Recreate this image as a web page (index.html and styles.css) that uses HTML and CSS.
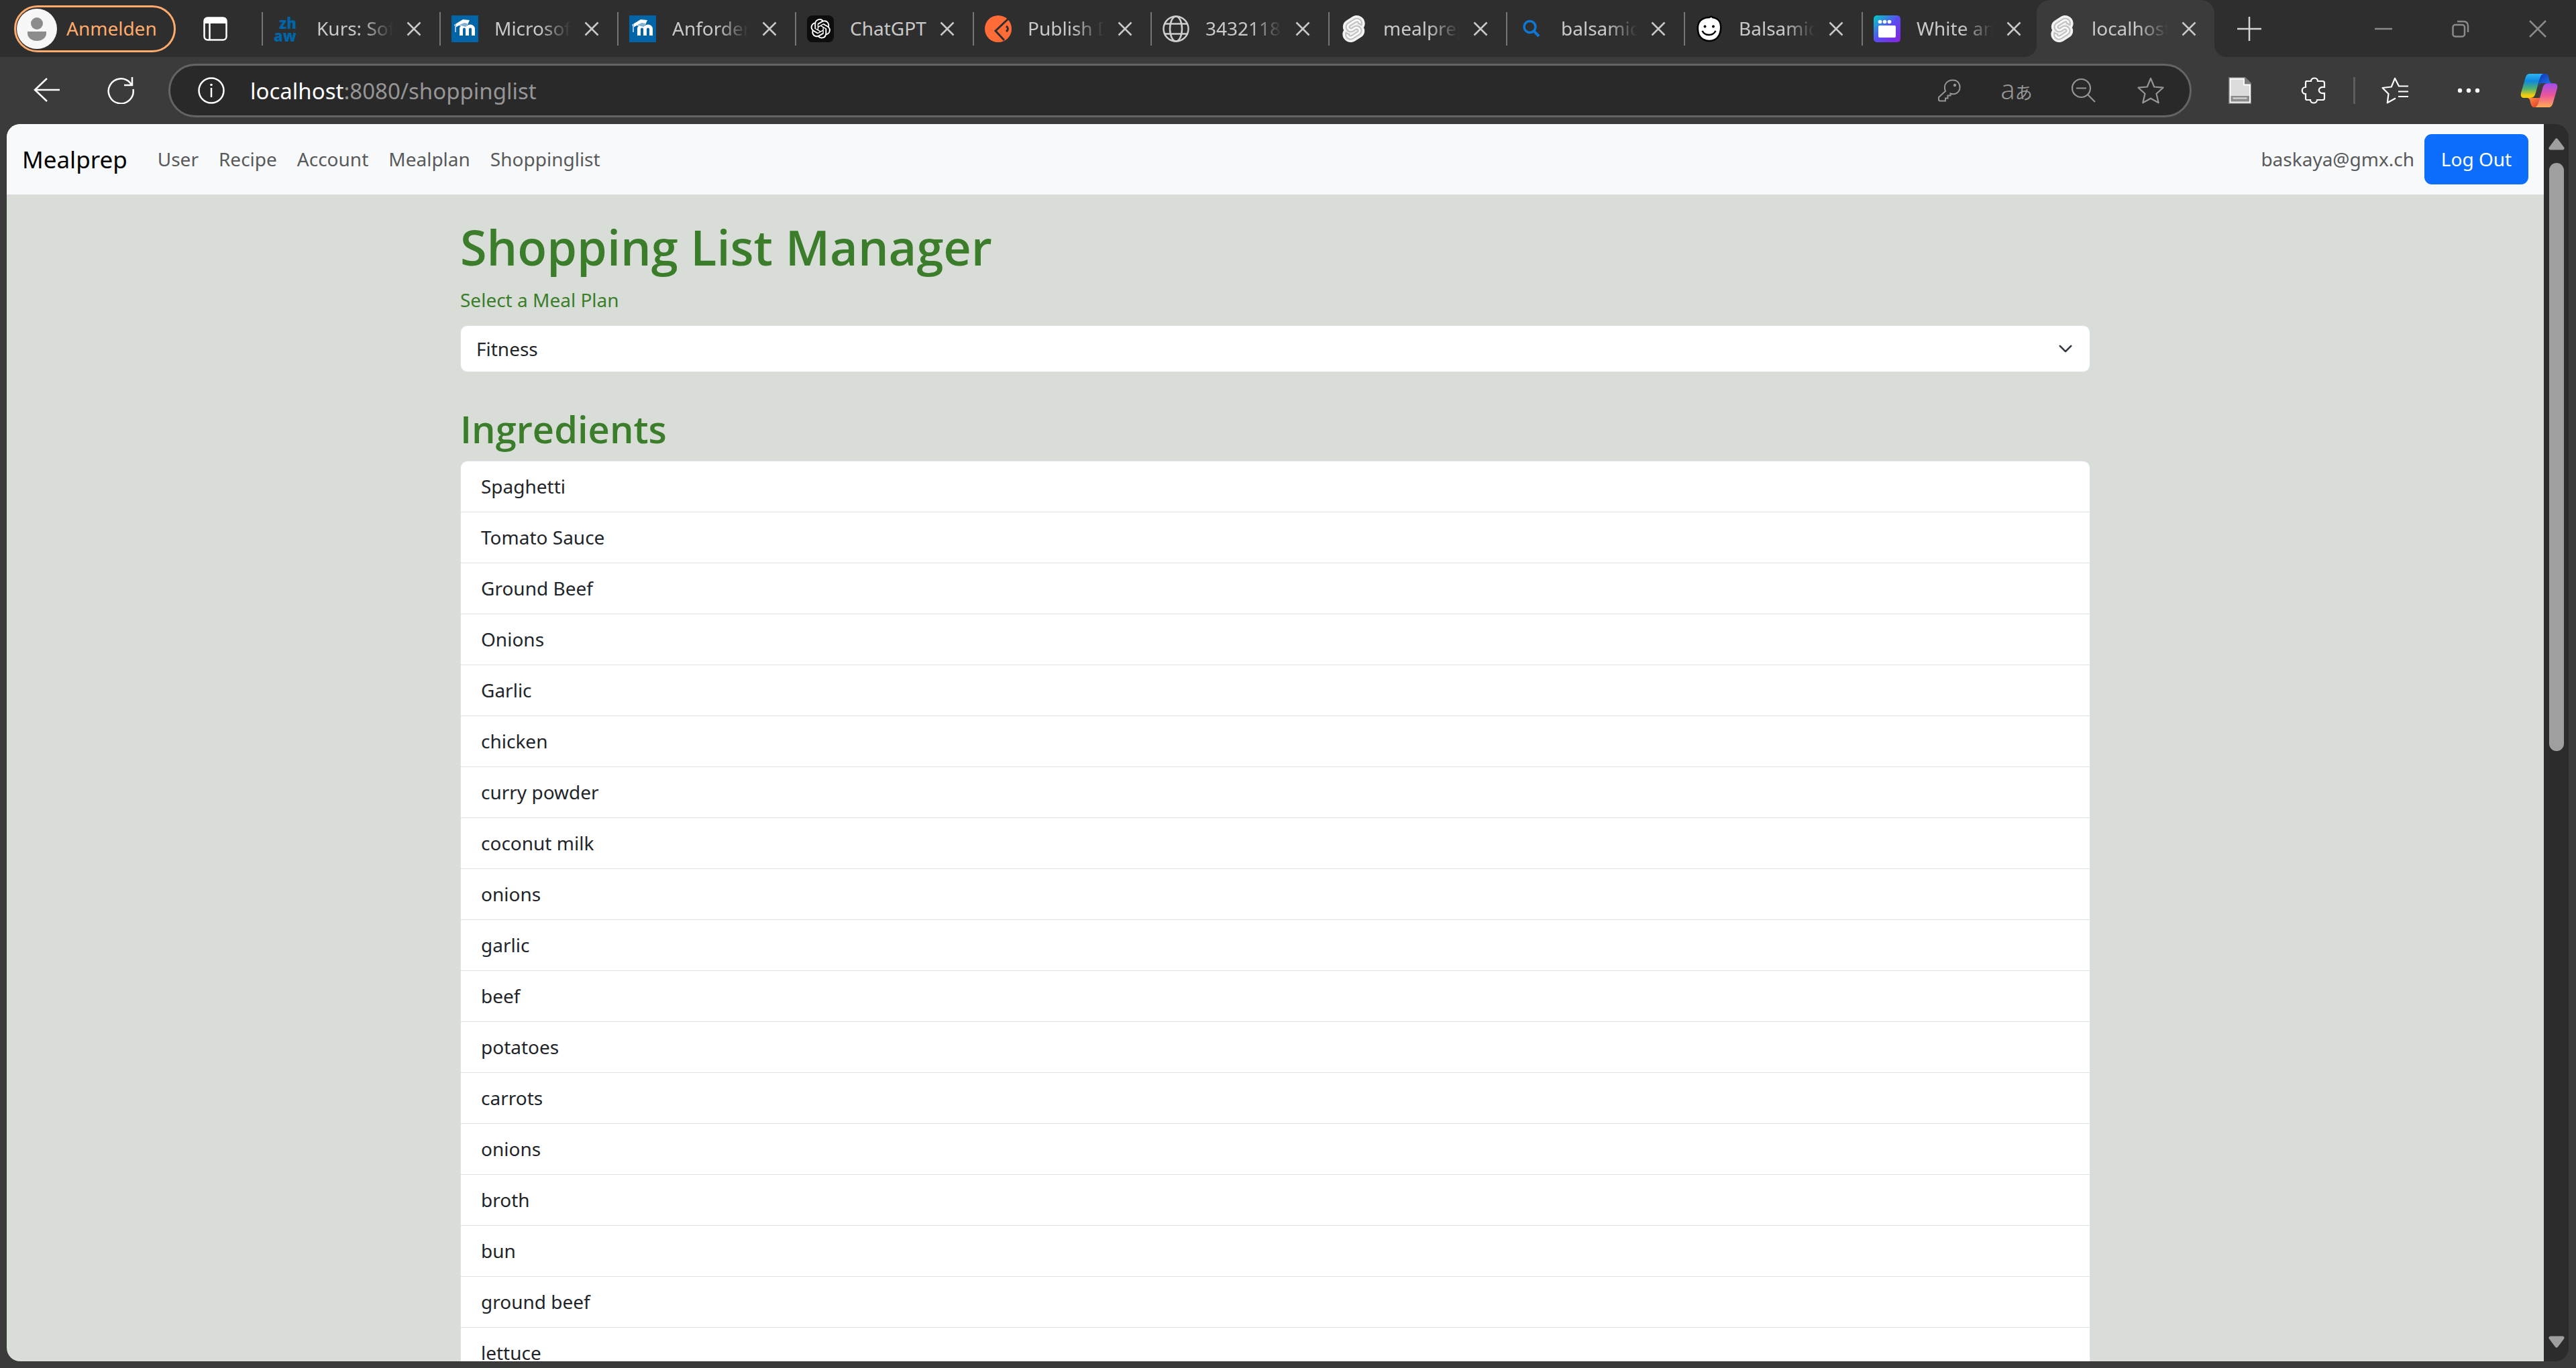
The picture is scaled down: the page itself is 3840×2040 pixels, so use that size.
FILE: index.html
```html
<!DOCTYPE html>
<html lang="de">
<head>
<meta charset="utf-8">
<title>localhost:8080/shoppinglist</title>
<link rel="stylesheet" href="styles.css">
</head>
<body>
<svg class="defs" aria-hidden="true">
  <defs>
    <symbol id="close" viewBox="0 0 22 22"><path d="M1.500 1.500l19 19M20.500 1.500l-19 19" fill="none" stroke="currentColor" stroke-width="2.500"/></symbol>
    <symbol id="moodle" viewBox="0 0 40 40">
      <path fill="#0064a6" d="M0 0h40v40H0z"/>
      <path d="M12.500 30V20.500c0-6 9-6 9 0V30M21.500 20.500c0-6 9-6 9 0V30" transform="translate(2)" fill="none" stroke="#fff" stroke-width="5"/>
      <path d="M4 14l13-8 10 1-3 7-8 2-5-1-5 3z" fill="#fff"/>
      <path d="M12 14l7-3 5 1-2 5-5-1z" fill="#7fb1d2"/>
      <path d="M6 13v12" stroke="#9cc3dd" stroke-width="2"/>
    </symbol>
    <symbol id="svelte" viewBox="0 0 24 24">
      <path fill="#f2f2f2" d="M20.712 3.175C18.484-.015 14.082-.96 10.9 1.068L5.310 4.630a6.412 6.412 0 0 0-2.896 4.295 6.753 6.753 0 0 0 .666 4.336 6.430 6.430 0 0 0-.96 2.396 6.833 6.833 0 0 0 1.168 5.167c2.229 3.190 6.630 4.135 9.812 2.108l5.590-3.562a6.410 6.410 0 0 0 2.896-4.295 6.756 6.756 0 0 0-.665-4.336 6.429 6.429 0 0 0 .958-2.396 6.831 6.831 0 0 0-1.167-5.168Z"/>
      <path fill="#fafafa" stroke="#c2c2c2" stroke-width="1.300" d="M10.354 21.125a4.440 4.440 0 0 1-4.765-1.767 4.109 4.109 0 0 1-.703-3.107 3.898 3.898 0 0 1 .134-.522l.105-.321.287.21a7.210 7.210 0 0 0 2.186 1.092l.208.063-.02.208a1.253 1.253 0 0 0 .226.83 1.337 1.337 0 0 0 1.435.533 1.231 1.231 0 0 0 .343-.15l5.590-3.562a1.164 1.164 0 0 0 .524-.778 1.242 1.242 0 0 0-.211-.937 1.338 1.338 0 0 0-1.435-.533 1.230 1.230 0 0 0-.343.15l-2.133 1.360a4.078 4.078 0 0 1-1.135.499 4.440 4.440 0 0 1-4.765-1.766 4.108 4.108 0 0 1-.702-3.108 3.855 3.855 0 0 1 1.742-2.582l5.589-3.563a4.072 4.072 0 0 1 1.135-.499 4.440 4.440 0 0 1 4.765 1.767 4.109 4.109 0 0 1 .703 3.107 3.943 3.943 0 0 1-.134.522l-.105.321-.286-.21a7.204 7.204 0 0 0-2.187-1.093l-.208-.063.02-.207a1.255 1.255 0 0 0-.226-.831 1.337 1.337 0 0 0-1.435-.532 1.231 1.231 0 0 0-.343.15L8.620 9.368a1.162 1.162 0 0 0-.524.778 1.240 1.240 0 0 0 .211.937 1.338 1.338 0 0 0 1.435.533 1.235 1.235 0 0 0 .344-.151l2.132-1.360a4.067 4.067 0 0 1 1.135-.498 4.440 4.440 0 0 1 4.765 1.766 4.108 4.108 0 0 1 .702 3.108 3.857 3.857 0 0 1-1.742 2.583l-5.589 3.562a4.072 4.072 0 0 1-1.135.499"/>
    </symbol>
    <linearGradient id="app" x1="0" y1="0" x2="1" y2="1"><stop offset="0" stop-color="#00d0c4"/><stop offset=".5" stop-color="#5a4cf0"/><stop offset="1" stop-color="#8a22e0"/></linearGradient>
    <linearGradient id="cool" x1="0" y1="0" x2="0" y2="1"><stop offset="0" stop-color="#2fb4f5"/><stop offset=".3" stop-color="#1089dc"/><stop offset=".62" stop-color="#4fb071"/><stop offset=".9" stop-color="#f2cb10"/></linearGradient>
    <linearGradient id="warm" x1="0" y1="0" x2="0" y2="1"><stop offset="0" stop-color="#a04bee"/><stop offset=".5" stop-color="#ee559a"/><stop offset="1" stop-color="#fdae52"/></linearGradient>
    <linearGradient id="deep" x1="0" y1="0" x2="1" y2="1"><stop offset="0" stop-color="#1234b4"/><stop offset="1" stop-color="#1d7ff0"/></linearGradient>
    <linearGradient id="fire" x1="0" y1="0" x2="1" y2="1"><stop offset="0" stop-color="#ff9140"/><stop offset="1" stop-color="#e2352f"/></linearGradient>
  </defs>
</svg>

<header class="browser">
  <div class="tabstrip">
    <button class="profile">
      <svg class="avatar" viewBox="0 0 60 60"><circle cx="30" cy="30" r="30" fill="#f7f7f7"/><circle cx="30" cy="22" r="9" fill="#8c8c8c"/><path d="M16 34h28v3c0 6-6 11-14 11s-14-5-14-11z" fill="#8c8c8c"/></svg>
      <span>Anmelden</span>
    </button>
    <button class="workspaces" aria-label="Tabs"><svg viewBox="0 0 36 36"><rect x="1.500" y="1.500" width="33" height="33" rx="5" fill="none" stroke="#fff" stroke-width="2.500"/><path d="M1 10V6q0-5 5-5h24q5 0 5 5v4z" fill="#fff"/><path d="M9.500 9v25" stroke="#fff" stroke-width="2.500"/></svg></button>
    <nav class="tabs" aria-label="Offene Tabs">
      <div class="tab"><svg class="fav" viewBox="0 0 40 40"><text class="zhaw" x="8" y="20">zh</text><text class="zhaw" x="0" y="39">aw</text></svg><span class="title fade">Kurs: Software</span><button class="x" aria-label="Tab schließen"><svg><use href="#close"/></svg></button></div>
      <div class="tab"><svg class="fav"><use href="#moodle"/></svg><span class="title fade">Microsoft</span><button class="x" aria-label="Tab schließen"><svg><use href="#close"/></svg></button></div>
      <div class="tab"><svg class="fav"><use href="#moodle"/></svg><span class="title fade">Anforderung</span><button class="x" aria-label="Tab schließen"><svg><use href="#close"/></svg></button></div>
      <div class="tab"><svg class="fav" viewBox="0 0 40 40"><rect width="40" height="40" rx="8" fill="#0d0d0d"/><path transform="translate(5.500 5) scale(1.230)" fill="#fff" d="M22.2819 9.8211a5.9847 5.9847 0 0 0-.5157-4.9108 6.0462 6.0462 0 0 0-6.5098-2.9A6.0651 6.0651 0 0 0 4.9807 4.1818a5.9847 5.9847 0 0 0-3.9977 2.9 6.0462 6.0462 0 0 0 .7427 7.0966 5.98 5.98 0 0 0 .511 4.9107 6.051 6.051 0 0 0 6.5146 2.9001A5.9847 5.9847 0 0 0 13.2599 24a6.0557 6.0557 0 0 0 5.7718-4.2058 5.9894 5.9894 0 0 0 3.9977-2.9001 6.0557 6.0557 0 0 0-.7475-7.0729zm-9.022 12.6081a4.4755 4.4755 0 0 1-2.8764-1.0408l.1419-.0804 4.7783-2.7582a.7948.7948 0 0 0 .3927-.6813v-6.7369l2.02 1.1686a.071.071 0 0 1 .038.052v5.5826a4.504 4.504 0 0 1-4.4945 4.4944zm-9.6607-4.1254a4.4708 4.4708 0 0 1-.5346-3.0137l.142.0852 4.783 2.7582a.7712.7712 0 0 0 .7806 0l5.8428-3.3685v2.3324a.0804.0804 0 0 1-.0332.0615L9.74 19.9502a4.4992 4.4992 0 0 1-6.1408-1.6464zM2.3408 7.8956a4.485 4.485 0 0 1 2.3655-1.9728V11.6a.7664.7664 0 0 0 .3879.6765l5.8144 3.3543-2.0201 1.1685a.0757.0757 0 0 1-.071 0l-4.8303-2.7865A4.504 4.504 0 0 1 2.3408 7.872zm16.5963 3.8558L13.1038 8.364 15.1192 7.2a.0757.0757 0 0 1 .071 0l4.8303 2.7913a4.4944 4.4944 0 0 1-.6765 8.1042v-5.6772a.79.79 0 0 0-.407-.667zm2.0107-3.0231l-.142-.0852-4.7735-2.7818a.7759.7759 0 0 0-.7854 0L9.409 9.2297V6.8974a.0662.0662 0 0 1 .0284-.0615l4.8303-2.7866a4.4992 4.4992 0 0 1 6.6802 4.66zM8.3065 12.863l-2.02-1.1638a.0804.0804 0 0 1-.038-.0567V6.0742a4.4992 4.4992 0 0 1 7.3757-3.4537l-.142.0805L8.704 5.459a.7948.7948 0 0 0-.3927.6813zm1.0976-2.3654l2.602-1.4998 2.6069 1.4998v2.9994l-2.5974 1.4997-2.6067-1.4997Z"/></svg><span class="title">ChatGPT</span><button class="x" aria-label="Tab schließen"><svg><use href="#close"/></svg></button></div>
      <div class="tab"><svg class="fav" viewBox="0 0 40 40"><circle cx="20" cy="20" r="20" fill="#ff6c37"/><path d="M35 5L16 23l13 14" fill="none" stroke="#2e2e2e" stroke-width="3"/><path d="M32 16q5 4 0 8" fill="none" stroke="#2e2e2e" stroke-width="3"/></svg><span class="title fade">Publish Docs</span><button class="x" aria-label="Tab schließen"><svg><use href="#close"/></svg></button></div>
      <div class="tab"><svg class="fav" viewBox="0 0 40 40"><g fill="none" stroke="#cfcfcf" stroke-width="2.500"><circle cx="20" cy="20" r="18.500"/><ellipse cx="20" cy="20" rx="9" ry="18.500"/><path d="M3 12.500h34M3 27.500h34"/></g></svg><span class="title fade">3432118</span><button class="x" aria-label="Tab schließen"><svg><use href="#close"/></svg></button></div>
      <div class="tab"><svg class="fav"><use href="#svelte"/></svg><span class="title fade">mealprep</span><button class="x" aria-label="Tab schließen"><svg><use href="#close"/></svg></button></div>
      <div class="tab"><svg class="fav" viewBox="0 0 40 40"><circle cx="17.500" cy="17" r="8.500" fill="none" stroke="#0f78d4" stroke-width="3.500"/><path d="M23 23l8 8" stroke="#0f78d4" stroke-width="4"/></svg><span class="title fade">balsamiq</span><button class="x" aria-label="Tab schließen"><svg><use href="#close"/></svg></button></div>
      <div class="tab"><svg class="fav" viewBox="0 0 40 40"><path d="M20 3c3-3 5 0 5 0 11 2 13 9 12 18-1 11-8 17-17 17S3 32 3 21C2 10 8 3 20 3z" fill="#fff" stroke="#000" stroke-width="2.500"/><circle cx="13.500" cy="16.500" r="2" fill="#000"/><circle cx="26" cy="16.500" r="2" fill="#000"/><path d="M9.500 23c4 8 16 8 20 0" fill="none" stroke="#000" stroke-width="2.500"/></svg><span class="title fade">Balsamiq</span><button class="x" aria-label="Tab schließen"><svg><use href="#close"/></svg></button></div>
      <div class="tab"><svg class="fav" viewBox="0 0 40 40"><rect width="40" height="40" rx="5" fill="url(#app)"/><g fill="#fff"><circle cx="9.500" cy="9.500" r="2.800"/><circle cx="16.500" cy="9.500" r="2.800"/><circle cx="23.500" cy="9.500" r="2.800"/><rect x="7" y="15" width="26" height="18" rx="2"/></g></svg><span class="title fade">White and</span><button class="x" aria-label="Tab schließen"><svg><use href="#close"/></svg></button></div>
      <div class="tab active"><svg class="fav"><use href="#svelte"/></svg><span class="title fade">localhost</span><button class="x" aria-label="Tab schließen"><svg><use href="#close"/></svg></button></div>
    </nav>
    <button class="newtab" aria-label="Neuer Tab"><svg viewBox="0 0 36 36"><path d="M18 0v36M0 18h36" stroke="#d6d6d6" stroke-width="2.500"/></svg></button>
    <div class="window">
      <button aria-label="Minimieren"><svg viewBox="0 0 26 26"><path d="M0 13h26" stroke="currentColor" stroke-width="2.500"/></svg></button>
      <button aria-label="Verkleinern"><svg viewBox="0 0 26 26"><g fill="none" stroke="currentColor" stroke-width="2.500"><rect x="1.500" y="7" width="17.500" height="17.500" rx="3.500"/><path d="M8 2h9q7 0 7 7v9"/></g></svg></button>
      <button aria-label="Schließen"><svg viewBox="0 0 26 26"><path d="M1 1l24 24M25 1L1 25" stroke="currentColor" stroke-width="2.500"/></svg></button>
    </div>
  </div>

  <div class="toolbar">
    <button class="tool" aria-label="Zurück"><svg viewBox="0 0 40 40"><path d="M39 19H2M20 2L2 19l18 17" fill="none" stroke="#fff" stroke-width="2.500"/></svg></button>
    <button class="tool" aria-label="Aktualisieren"><svg viewBox="0 0 40 40"><path d="M38.500 18A18.500 18.500 0 1 1 34 8.500L36.500 12M37 0v12H25" fill="none" stroke="#fff" stroke-width="2.500"/></svg></button>
    <div class="omnibox">
      <svg class="info" viewBox="0 0 40 40"><circle cx="20" cy="20" r="18.500" fill="none" stroke="#fff" stroke-width="2.500"/><path d="M20 16v14" stroke="#fff" stroke-width="2.500"/><circle cx="20" cy="11.500" r="1.800" fill="#fff"/></svg>
      <div class="url" role="textbox" aria-label="Adresse" contenteditable="true" spellcheck="false"><b>localhost</b>:8080/shoppinglist</div>
      <button aria-label="Passwort"><svg viewBox="0 0 40 40"><path d="M14 21C10 11 17 4.500 25 4.500S36 11 35.500 16C35 23 28 27 21.500 24.500v3h-4v4h-3.500v4H6c-1.500 0-2-.5-2-2V30z" fill="none" stroke="currentColor" stroke-width="2"/><circle cx="28" cy="12" r="2.200" fill="currentColor"/></svg></button>
      <button class="translate" aria-label="Übersetzen">a<small>あ</small></button>
      <button aria-label="Zoom"><svg viewBox="0 0 40 40"><g fill="none" stroke="currentColor" stroke-width="2.200"><circle cx="16.500" cy="16.500" r="13.500"/><path d="M26 26l11 11M9 16.500h15"/></g></svg></button>
      <button aria-label="Favorit"><svg viewBox="0 0 40 40"><path d="M20 1.800l5.200 12.700 13.300 1.200-10 9 3.200 13.600L20 31.700 8.300 38.300l3.200-13.600-10-9 13.300-1.200z" fill="none" stroke="currentColor" stroke-width="2.200" stroke-linejoin="round"/></svg></button>
    </div>
    <button class="tool" aria-label="Dokument"><svg viewBox="0 0 40 40"><path d="M3 0h25l9 9v31H3z" fill="#7a7a7a"/><path d="M5.500 2.500H26v9h9v26H5.500z" fill="#dcdcdc" stroke="#fff" stroke-width="1.800"/><path d="M6.500 28h27.500v8.500H6.500z" fill="#8b8b8b"/><path d="M9.500 31.500h21" stroke="#cfcfcf" stroke-width="2.500"/></svg></button>
    <button class="tool" aria-label="Erweiterungen"><svg viewBox="0 0 40 40"><path d="M8 6h8c0-6 10-6 10 0h7q3 0 3 3v6c-11-2-11 11 0 9v8q0 2-3 2h-8c0 6-10 6-10 0H10q-2 0-2-2v-7c-7 0-7-10 0-10V8q0-2 2-2" fill="none" stroke="#fff" stroke-width="2.200"/></svg></button>
    <span class="divider"></span>
    <button class="tool" aria-label="Favoriten"><svg viewBox="0 0 40 40"><path d="M40 13.500H26L20 1.800 14.800 14.500 1.500 16l9 9-1.700 13.300L21 31.500M25 21.500h15M25 29h15" fill="none" stroke="#fff" stroke-width="2.200" stroke-linejoin="round"/></svg></button>
    <button class="tool" aria-label="Mehr"><svg viewBox="0 0 40 40"><g fill="#fff"><circle cx="7" cy="20" r="3.200"/><circle cx="20" cy="20" r="3.200"/><circle cx="33" cy="20" r="3.200"/></g></svg></button>
    <button class="copilot" aria-label="Copilot"><svg viewBox="0 0 168 150"><path fill="url(#deep)" d="M85 0h28c10 0 13 10 15 20 3 12 5 20 14 22H98c-8 0-12 6-15 14z"/><path fill="url(#fire)" d="M32 108h58l-14 34c-3 6-8 8-14 8-10 0-14-10-17-22-2-12-5-18-13-20z"/><path fill="url(#cool)" d="M42 0h63C93 2 90 12 86 24L68 88c-5 14-10 20-22 20H18C4 108 0 98 3 86L22 20C26 6 32 0 42 0z"/><path fill="url(#warm)" d="M122 43h28c14 0 18 10 15 22l-19 66c-4 13-10 19-20 19H63c12-2 15-12 19-24l18-63c4-13 10-20 22-20z"/></svg></button>
  </div>
</header>

<div class="viewport">
  <div class="page">
    <nav class="navbar">
      <a class="brand" href="#">Mealprep</a>
      <a href="#user">User</a>
      <a href="#recipe">Recipe</a>
      <a href="#account">Account</a>
      <a href="#mealplan">Mealplan</a>
      <a href="#shoppinglist">Shoppinglist</a>
      <span class="email">baskaya@gmx.ch</span>
      <button class="logout">Log Out</button>
    </nav>
    <main class="container">
      <h1>Shopping List Manager</h1>
      <label for="plan">Select a Meal Plan</label>
      <select id="plan"><option>Fitness</option></select>
      <h2>Ingredients</h2>
      <ul class="list">
        <li>Spaghetti</li>
        <li>Tomato Sauce</li>
        <li>Ground Beef</li>
        <li>Onions</li>
        <li>Garlic</li>
        <li>chicken</li>
        <li>curry powder</li>
        <li>coconut milk</li>
        <li>onions</li>
        <li>garlic</li>
        <li>beef</li>
        <li>potatoes</li>
        <li>carrots</li>
        <li>onions</li>
        <li>broth</li>
        <li>bun</li>
        <li>ground beef</li>
        <li>lettuce</li>
      </ul>
    </main>
  </div>
  <div class="scrollbar" aria-hidden="true">
    <svg viewBox="0 0 24 18"><path d="M12 3L21 15H3z" fill="#9f9f9f" stroke="#9f9f9f" stroke-width="5" stroke-linejoin="round"/></svg>
    <div class="track"><div class="thumb"></div></div>
    <svg viewBox="0 0 24 18"><path d="M12 15L3 3h18z" fill="#9f9f9f" stroke="#9f9f9f" stroke-width="5" stroke-linejoin="round"/></svg>
  </div>
</div>
</body>
</html>
```
FILE: styles.css
```css
* { box-sizing: border-box; }

body {
  margin: 0;
  height: 100vh;
  display: flex;
  flex-direction: column;
  overflow: hidden;
  background: #3b3b3b;
  color: #212529;
  font-family: "Noto Sans", "Noto Sans CJK JP", sans-serif;
  font-size: 28px;
  line-height: 45px;
}

.defs { position: absolute; width: 0; height: 0; }
svg { display: block; flex: none; }

button {
  flex: none;
  display: flex;
  align-items: center;
  justify-content: center;
  margin: 0;
  padding: 0;
  border: 0;
  background: none;
  color: inherit;
  font: inherit;
}

/* Tab strip */
.tabstrip {
  display: flex;
  align-items: center;
  height: 85px;
  padding-left: 21px;
  background: #2e2e2e;
}

.profile {
  width: 241px;
  height: 70px;
  gap: 14px;
  justify-content: flex-start;
  padding-left: 1px;
  border: 3px solid #ffab6b;
  border-radius: 35px;
  color: #ffab6b;
}
.avatar { width: 60px; height: 60px; }

.workspaces { margin: 0 51px 0 41px; }
.workspaces svg { width: 36px; height: 36px; }

.tabs { display: flex; align-self: stretch; }

.tab {
  position: relative;
  width: 265px;
  display: flex;
  align-items: center;
  padding-left: 18px;
  color: #c9c9c9;
}
.tab:not(.active)::before {
  content: "";
  position: absolute;
  left: 0;
  width: 2px;
  height: 50px;
  background: #757575;
}
.fav { width: 40px; height: 40px; margin-right: 24px; overflow: visible; }
.zhaw { font: 800 22px/1 "Open Sans", sans-serif; fill: #0064a6; }
.title { width: 114px; overflow: hidden; white-space: nowrap; margin-right: 20px; }
.fade { mask-image: linear-gradient(to right, #000 68px, transparent 114px); }
.x svg { width: 22px; height: 22px; }

.active {
  margin-left: -4px;
  background: #3b3b3b;
  border-radius: 20px 20px 0 0;
}
.active::before,
.active::after {
  content: "";
  position: absolute;
  bottom: 0;
  width: 18px;
  height: 18px;
}
.active::before { right: 100%; background: radial-gradient(circle at 0 0, transparent 18px, #3b3b3b 18px); }
.active::after { left: 100%; background: radial-gradient(circle at 100% 0, transparent 18px, #3b3b3b 18px); }

.newtab { margin-left: 34px; }
.newtab svg { width: 36px; height: 36px; }

.window { display: flex; margin-left: auto; color: #8a8a8a; }
.window button { width: 115px; }
.window svg { width: 26px; height: 26px; }

/* Toolbar */
.toolbar {
  display: flex;
  align-items: center;
  height: 100px;
  padding: 0 5px 0 15px;
}
.tool { width: 110px; }
.tool svg { width: 40px; height: 40px; }
.copilot { width: 100px; }
.copilot svg { width: 56px; height: 50px; }
.divider { width: 3px; height: 40px; margin: 0 4px; background: #5e5e5e; }

.omnibox {
  flex: 1;
  display: flex;
  align-items: center;
  height: 80px;
  margin: 0 17px 0 16px;
  padding: 0 8px 0 41px;
  border: 3px solid #646464;
  border-radius: 40px;
  background: #292929;
  color: #969696;
}
.info { width: 40px; height: 40px; margin-right: 38px; }
.url { flex: 1; font-size: 33px; white-space: nowrap; }
.url b { font-weight: 400; color: #fff; }
.omnibox button { width: 100px; }
.omnibox button svg { width: 40px; height: 40px; }
.translate { font-size: 40px; font-weight: 300; align-items: baseline; }
.translate small { font-size: 26px; font-weight: 400; }

/* Web page */
.viewport {
  flex: 1;
  min-height: 0;
  display: flex;
  margin: 0 11px 10px 10px;
  border-radius: 20px;
  overflow: hidden;
  background: #2c2c2c;
}
.page { flex: 1; overflow: hidden; background: #d8ddd7; }

.navbar {
  display: flex;
  align-items: center;
  gap: 30px;
  padding: 15px 23px;
  background: #f8f9fa;
}
.navbar a, .email { color: #595a5b; text-decoration: none; }
.navbar .brand { margin-right: 15px; color: #000; font-size: 35px; }
.email { margin-left: auto; margin-right: -15px; }
.logout {
  width: 155px;
  height: 75px;
  border-radius: 11px;
  background: #0d6efd;
  color: #fff;
}

.container {
  max-width: 2430px;
  margin: 0 auto;
  padding-top: 33px;
}
h1, h2, label { color: #3b7d2b; }
h1, h2 { font-family: "Open Sans", sans-serif; font-weight: 600; }
h1 { margin: 0 0 12px; font-size: 72px; line-height: 90px; }
label { display: block; margin-bottom: 15px; }
h2 { margin: 48px 0 12px; font-size: 56px; line-height: 72px; }

select {
  display: block;
  width: 100%;
  height: 70px;
  padding: 0 23px;
  appearance: none;
  border: 1px solid #dee2e6;
  border-radius: 11px;
  background: #fff url("data:image/svg+xml,%3Csvg xmlns='http://www.w3.org/2000/svg' viewBox='0 0 16 16'%3E%3Cpath fill='none' stroke='%23343a40' stroke-linecap='round' stroke-linejoin='round' stroke-width='2' d='m2 5 6 6 6-6'/%3E%3C/svg%3E") no-repeat right 25px center / 22px 22px;
  color: #212529;
  font: inherit;
}

.list {
  margin: 0;
  padding: 0;
  list-style: none;
  border: 1px solid #dee2e6;
  border-radius: 11px;
  overflow: hidden;
  background: #fff;
}
.list li { padding: 15px 30px; border-bottom: 1px solid #dee2e6; }

.scrollbar {
  width: 37px;
  display: flex;
  flex-direction: column;
  align-items: center;
  gap: 19px;
  padding: 21px 0 20px;
}
.scrollbar svg { width: 24px; height: 18px; }
.track { flex: 1; display: flex; flex-direction: column; }
.track::after { content: ""; flex: 35; }
.thumb { flex: 36; width: 22px; border-radius: 11px; background: #9f9f9f; }
```
